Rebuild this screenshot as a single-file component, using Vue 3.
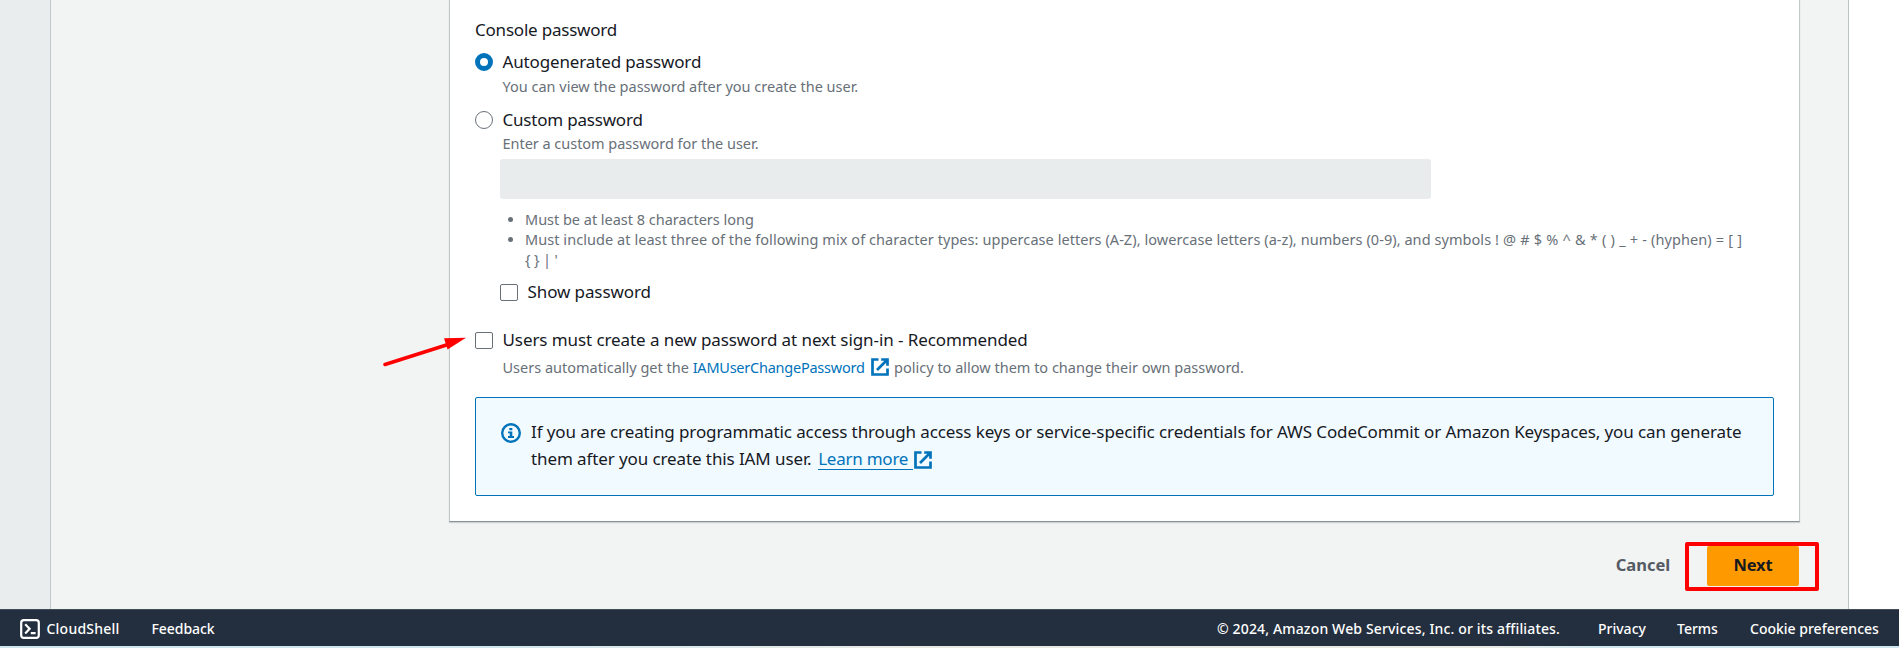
<script setup>
const rules = [
  { text: 'Must be at least 8 characters long', cls: 'rule-short' },
  {
    text: 'Must include at least three of the following mix of character types: uppercase letters (A-Z), lowercase letters (a-z), numbers (0-9), and symbols ',
    symbols: "! @ # $ % ^ & * ( ) _ + - (hyphen) = [ ] ",
    rest: "{ } | '",
    cls: 'rule-long',
  },
]
</script>

<template>
  <div class="page">
    <div class="workspace">
      <aside class="rail"></aside>
      <main class="main">
        <section class="card">
          <h2 class="title t-console">Console password</h2>

          <label class="option auto">
            <span class="radio checked"></span>
            <span class="label t-auto">Autogenerated password</span>
          </label>
          <p class="hint auto-hint t-view">You can view the password after you create the user.</p>

          <label class="option custom">
            <span class="radio"></span>
            <span class="label t-custom">Custom password</span>
          </label>
          <p class="hint custom-hint t-enter">Enter a custom password for the user.</p>

          <div class="field"></div>
          <ul class="rules">
            <li v-for="r in rules" :key="r.cls" :class="r.cls">{{ r.text }}<span v-if="r.symbols" class="symbols">{{ r.symbols }}</span><span v-if="r.rest" class="rest">{{ r.rest }}</span></li>
          </ul>

          <label class="option show">
            <span class="checkbox"></span>
            <span class="label t-show">Show password</span>
          </label>

          <label class="option reset">
            <span class="checkbox"></span>
            <span class="label t-reset">Users must create a new password at next sign-in - Recommended</span>
          </label>
          <p class="hint reset-hint">
            <span>Users automatically get the&nbsp;</span>
            <a class="link t-policy">IAMUserChangePassword</a>
            <svg class="ext" viewBox="0 0 18 18"><path d="M7.5 1.5H1.5V16.5H16.5V10.5M10.2 1.5H16.5V7.8M16 2L6 12" /></svg>
            <span>policy to allow them to change their own password.</span>
          </p>

          <div class="alert">
            <svg class="info" viewBox="0 0 20 20">
              <circle cx="10" cy="10" r="8.8" />
              <path d="M8.3 5H11.3V7.2H8.3ZM7 8.5H11.3V13H13V15H7V13H8.7V10.3H7Z" />
            </svg>
            <div class="message">
              <div>If you are creating programmatic access through access keys or service-specific credentials for AWS CodeCommit or Amazon Keyspaces, you can generate</div>
              <div class="line">
                <span>them after you create this IAM user.&nbsp;</span>
                <a class="learn">Learn more</a>
                <svg class="ext" viewBox="0 0 18 18"><path d="M7.5 1.5H1.5V16.5H16.5V10.5M10.2 1.5H16.5V7.8M16 2L6 12" /></svg>
              </div>
            </div>
          </div>
        </section>

        <div class="actions">
          <button class="cancel">Cancel</button>
          <button class="next">Next</button>
        </div>
      </main>
      <div class="gutter"></div>
    </div>

    <footer class="footer">
      <svg class="shell" viewBox="0 0 20 20">
        <rect x="1.2" y="1.2" width="17.6" height="17.6" rx="2.6" />
        <path d="M5.2 5.2L9.6 9.8L5.2 14.4M10.8 14.2H15.6" />
      </svg>
      <span class="f-shell">CloudShell</span>
      <span class="f-feedback">Feedback</span>
      <span class="f-copy">© 2024, Amazon Web Services, Inc. or its affiliates.</span>
      <span class="f-privacy">Privacy</span>
      <span class="f-terms">Terms</span>
      <span class="f-cookie">Cookie preferences</span>
    </footer>
    <div class="edge"></div>

    <svg class="arrow" viewBox="0 0 84 34">
      <path class="shaft" d="M3 27.5L66 7.5" />
      <path class="head" d="M62 1.2L84 0.8L65.5 12.5Z" />
    </svg>
    <div class="highlight"></div>
  </div>
</template>

<style>
body { overflow: hidden; }
</style>

<style scoped>
.page {
  position: relative;
  width: 1899px;
  height: 648px;
  display: flex;
  flex-direction: column;
  overflow: hidden;
  background: #fff;
  color: #16191f;
  font-family: "Noto Sans", sans-serif;
  font-size: 17px;
}
.page * { box-sizing: border-box; }
.workspace { height: 609px; display: flex; }
.rail { width: 51px; background: #eaeded; border-right: 1px solid #c3c7c8; }
.main { width: 1797px; background: #f2f3f3; }
.gutter { flex: 1; border-left: 1px solid #bdc2c5; background: #fff; }
.card {
  width: 1351px;
  height: 522px;
  margin-left: 398px;
  padding: 16px 25px 0;
  background: #fff;
  border: 1px solid #c3c8c9;
  border-top: 0;
  border-bottom: 1px solid #879196;
  box-shadow: 0 1px 1px #cdd2d3;
}
.title { margin: 0; height: 28px; font-size: 17px; font-weight: 400; line-height: 28px; }
.option { display: flex; align-items: center; height: 28px; line-height: 28px; white-space: nowrap; }
.label { margin-left: 9.5px; }
.auto { margin-top: 4px; }
.hint {
  margin: 0 0 0 27.5px;
  height: 20px;
  color: #687078;
  font-size: 14.5px;
  line-height: 20px;
  white-space: nowrap;
}
.auto-hint { margin-top: 0; }
.custom { margin-top: 10px; }
.custom-hint { margin-top: -1px; }
.radio {
  flex: none;
  width: 18px;
  height: 18px;
  border: 1.5px solid #687078;
  border-radius: 50%;
  background: #fff;
}
.checked { border: 5.3px solid #0073bb; }
.checkbox {
  flex: none;
  width: 18px;
  height: 17px;
  border: 1px solid #687078;
  border-radius: 2px;
  background: #fff;
}
.field { width: 931px; height: 40px; margin: 6px 0 0 25px; border-radius: 3px; background: #e9ecec; }
.rules {
  margin: 10px 0 0 50px;
  padding: 0;
  width: 1221px;
  color: #687078;
  font-size: 14.5px;
  line-height: 20px;
  list-style: none;
}
.rules li { position: relative; }
.rules li::before {
  content: "";
  position: absolute;
  left: -17px;
  top: 8px;
  width: 5px;
  height: 5px;
  border-radius: 50%;
  background: #687078;
}
.symbols { word-spacing: 0.3px; }
.rest { word-spacing: -0.4px; }
.show { margin: 9px 0 0 25px; }
.reset { margin-top: 20px; }
.reset-hint { display: flex; align-items: center; margin-top: 3px; }
.ext { flex: none; width: 18px; height: 18px; fill: none; stroke: #0073bb; stroke-width: 2.7; }
.link { color: #0073bb; }
.reset-hint .ext { margin: 0 5.5px 0 6px; }
.alert {
  display: flex;
  height: 99px;
  margin-top: 20px;
  padding: 20px 24px;
  border: 1px solid #0073bb;
  border-radius: 2px;
  background: #f1faff;
}
.info { flex: none; width: 20px; height: 20px; margin: 5px 0 0 1px; }
.info circle { fill: none; stroke: #0073bb; stroke-width: 2.4; }
.info path { fill: #0073bb; }
.message { margin-left: 10px; line-height: 27px; letter-spacing: -0.102px; white-space: nowrap; }
.line { display: flex; align-items: flex-start; }
.learn { height: 25px; margin-left: 2.3px; padding-right: 5px; border-bottom: 1px solid #0073bb; color: #0073bb; letter-spacing: -0.243px; }
.line .ext { margin: 6px 0 0 1px; }

.actions { display: flex; align-items: center; height: 40px; margin: 24px 49px 0 0; justify-content: flex-end; }
.actions button { padding: 0; border: 0; background: none; font: 700 16.5px/38px "Noto Sans", sans-serif; height: 40px; padding-bottom: 2px; }
.actions .cancel { width: 56px; margin-right: 36px; color: #545b64; letter-spacing: 0; white-space: nowrap; }
.actions .next { width: 92px; border-radius: 2px; background: #f90; color: #16191f; letter-spacing: -0.1px; }

.footer {
  display: flex;
  align-items: center;
  height: 37px;
  padding: 1px 20px 0;
  background: #232f3e;
  border-top: 1px solid #414d58;
  color: #fff;
  font-size: 14px;
  font-weight: 500;
  line-height: 20px;
  white-space: nowrap;
}
.footer span { padding-top: 1px; }
.shell { flex: none; width: 20px; height: 20px; margin-right: 6.5px; fill: none; stroke: #fff; stroke-width: 2.2; }
.f-shell { width: 105px; letter-spacing: 0.224px; }
.f-feedback { letter-spacing: -0.066px; }
.f-copy { width: 343px; margin-left: auto; margin-right: 38px; letter-spacing: 0.15px; }
.f-privacy { width: 48px; margin-right: 31px; }
.f-terms { width: 41px; margin-right: 32px; }
.f-cookie { width: 129px; }
.edge { height: 2px; background: linear-gradient(90deg, #cfe6ec 0, #cfe6ec 25%, #ebe9e5 50%, #ebe9e5 78%, #cfe6ec 84%, #cfe6ec 100%); }

.t-console { letter-spacing: -0.21px; }
.t-auto { letter-spacing: -0.14px; }
.t-custom { letter-spacing: -0.2px; }
.t-show { letter-spacing: -0.1px; }
.t-reset { letter-spacing: -0.085px; }
.t-view { letter-spacing: 0; }
.t-enter { letter-spacing: -0.03px; }
.rule-short { letter-spacing: -0.02px; }
.rule-long { letter-spacing: 0.06px; }
.t-policy { letter-spacing: -0.24px; }

.arrow { position: absolute; left: 382px; top: 337px; width: 84px; height: 34px; }
.shaft { fill: none; stroke: #f00; stroke-width: 3.6; stroke-linecap: round; }
.head { fill: #f00; }
.highlight {
  position: absolute;
  left: 1685px;
  top: 542px;
  width: 134px;
  height: 49px;
  border: 4px solid #f00;
  border-radius: 2px;
}
</style>
